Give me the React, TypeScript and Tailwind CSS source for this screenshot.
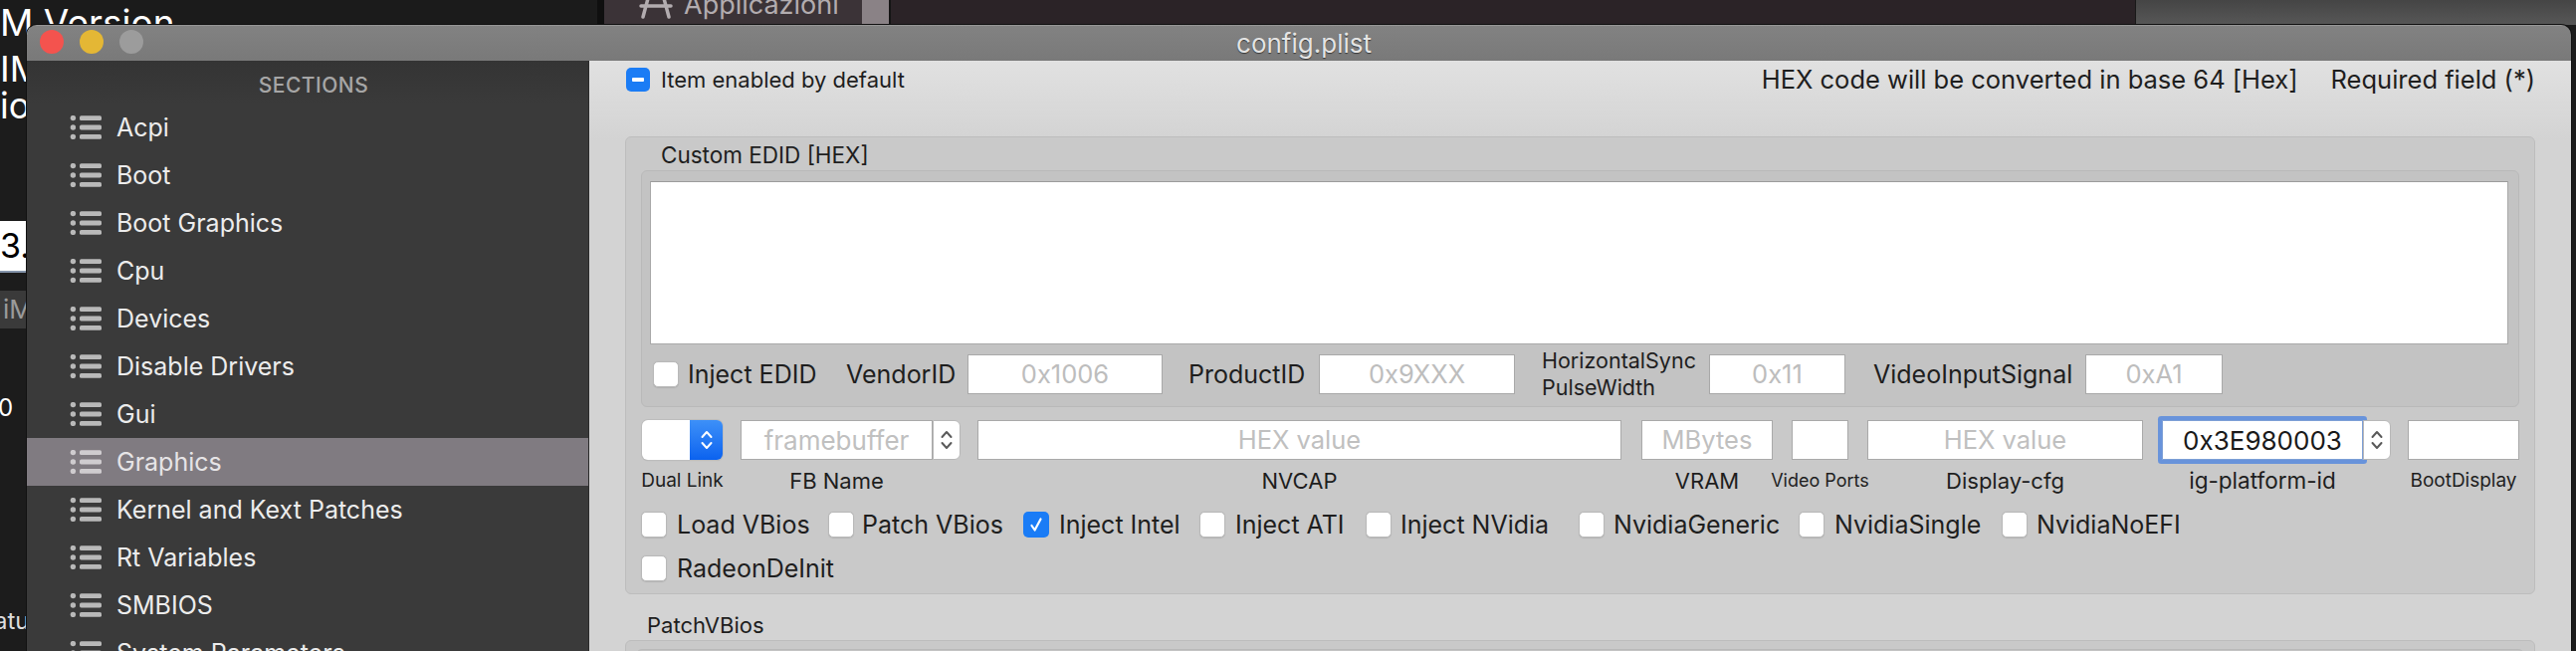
import React from "react";

const sections = [
  "Acpi",
  "Boot",
  "Boot Graphics",
  "Cpu",
  "Devices",
  "Disable Drivers",
  "Gui",
  "Graphics",
  "Kernel and Kext Patches",
  "Rt Variables",
  "SMBIOS",
  "System Parameters",
];

function ListIcon({ light }: { light?: boolean }) {
  const c = light ? "#cfcccf" : "#b9b9b9";
  return (
    <svg width="32" height="24" viewBox="0 0 32 24" className="shrink-0">
      {[2.6, 12, 21.4].map((y) => (
        <g key={y} fill={c}>
          <circle cx="3.4" cy={y} r="2.7" />
          <rect x="10" y={y - 2.4} width="22" height="4.8" rx="1.6" />
        </g>
      ))}
    </svg>
  );
}

function Check({ checked }: { checked?: boolean }) {
  if (checked) {
    return (
      <span className="w-[26px] h-[26px] rounded-[5px] bg-[#1a7cf6] flex items-center justify-center shrink-0">
        <svg width="16" height="18" viewBox="0 0 16 18">
          <path
            d="M3.5 10 L6.6 14.5 L12.5 3.5"
            stroke="white"
            strokeWidth="2.2"
            fill="none"
            strokeLinecap="round"
            strokeLinejoin="round"
          />
        </svg>
      </span>
    );
  }
  return (
    <span className="w-[26px] h-[26px] rounded-[5px] bg-white border border-[#b9b9b9] shadow-[0_0.5px_1px_rgba(0,0,0,0.1)] shrink-0" />
  );
}

function Chevrons({ color }: { color: string }) {
  return (
    <svg width="14" height="24" viewBox="0 0 14 24">
      <path
        d="M2.5 9 L7 4 L11.5 9 M2.5 15 L7 20 L11.5 15"
        stroke={color}
        strokeWidth="2"
        fill="none"
        strokeLinecap="round"
        strokeLinejoin="round"
      />
    </svg>
  );
}

function Stepper() {
  return (
    <div className="w-[28px] h-[40px] bg-white rounded-r-[6px] border border-[#b8b8b8] flex items-center justify-center shrink-0">
      <Chevrons color="#5a5a5a" />
    </div>
  );
}

const checkRow = [
  { label: "Load VBios", item: "", text: "w-[133px]", gap: "ml-[10px]" },
  { label: "Patch VBios", item: "ml-[19px]", text: "w-[145px]", gap: "ml-[8px]" },
  { label: "Inject Intel", item: "ml-[17px]", text: "w-[124px]", gap: "ml-[10px]", checked: true },
  { label: "Inject ATI", item: "ml-[17px]", text: "w-[110px]", gap: "ml-[10px]" },
  { label: "Inject NVidia", item: "ml-[21px]", text: "w-[152px]", gap: "ml-[9px]" },
  { label: "NvidiaGeneric", item: "ml-[27px]", text: "w-[169px]", gap: "ml-[9px]" },
  { label: "NvidiaSingle", item: "ml-[17px]", text: "w-[149px]", gap: "ml-[10px]" },
  { label: "NvidiaNoEFI", item: "ml-[19px]", text: "w-[145px]", gap: "ml-[9px]" },
];

export default function App() {
  return (
    <div className="relative w-[2588px] h-[654px] overflow-hidden bg-[#1c1c1c] font-['Inter',sans-serif]">
      {/* desktop behind the window */}
      <div className="absolute left-0 top-0 w-full h-[25px] flex">
        <div className="w-[600px] bg-[#1b1b1b]" />
        <div className="w-[7px] bg-[#0f0f0f]" />
        <div className="w-[259px] bg-[#3b3337] flex items-end overflow-hidden">
          <div className="flex items-center gap-[10px] pl-[34px] translate-y-[-6px]">
            <svg width="36" height="30" viewBox="0 0 36 30">
              <path d="M12 2 L5 28 M24 2 L31 28 M3 17 H33" stroke="#b2acaf" strokeWidth="3.5" strokeLinecap="round" fill="none" />
            </svg>
            <span className="text-[27px] text-[#b2acaf] leading-none">Applicazioni</span>
          </div>
        </div>
        <div className="w-[27px] bg-[#8a8286]" />
        <div className="w-[1252px] bg-[#2b2327] border-l-2 border-[#141414]" />
        <div className="flex-1 bg-gradient-to-b from-[#454545] to-[#575757] border-l border-[#1a1a1a]" />
      </div>
      <div className="absolute left-[0px] top-[0px] text-[37px] leading-none text-white whitespace-nowrap pt-[4px]">M Version</div>
      <div className="absolute left-[0px] top-[51px] text-[36px] leading-none text-white whitespace-nowrap">IM</div>
      <div className="absolute left-[0px] top-[88px] text-[36px] leading-none text-white whitespace-nowrap">io</div>
      <div className="absolute left-0 top-[222px] w-[40px] h-[52px] bg-white border-b-2 border-[#8494ab] flex items-center text-[34px] text-black leading-none">3.</div>
      <div className="absolute left-0 top-[292px] w-[40px] h-[38px] bg-[#3a3a3a] flex items-center pl-[3px] text-[26px] text-[#9a9a9a] leading-none">iM</div>
      <div className="absolute left-[-2px] top-[398px] text-[24px] leading-none text-white">0</div>
      <div className="absolute left-[-6px] top-[612px] text-[24px] leading-none text-[#dddddd]">atu</div>

      {/* window */}
      <div className="absolute left-[27px] top-[25px] w-[2556px] h-[660px] rounded-t-[10px] overflow-hidden flex flex-col shadow-[0_0_0_1px_#111]">
        <div className="relative h-[36px] shrink-0 bg-gradient-to-b from-[#828282] to-[#797979] flex items-center justify-center border-t border-[#959595]">
          <div className="absolute left-[13px] top-[4px] flex gap-[16px]">
            <span className="w-[24px] h-[24px] rounded-full bg-[#f4534e]" />
            <span className="w-[24px] h-[24px] rounded-full bg-[#e4b735]" />
            <span className="w-[24px] h-[24px] rounded-full bg-[#9c9c9c]" />
          </div>
          <span className="text-[26px] leading-none text-[#e4e4e4] [text-shadow:0_1px_1px_rgba(0,0,0,0.55)] translate-x-[5px]">
            config.plist
          </span>
        </div>

        <div className="flex flex-1 min-h-0">
          {/* sidebar */}
          <div className="w-[565px] shrink-0 bg-[#3a3a3a] rounded-tl-[6px] border-r border-[#2c2c2c] flex flex-col">
            <div className="h-[43px] flex items-end justify-center pl-[12px] pb-[8px] bg-gradient-to-b from-[#343434] to-[#3a3a3a]">
              <span className="text-[21px] leading-none text-[#a6a6a6] font-medium tracking-[0.5px]">SECTIONS</span>
            </div>
            {sections.map((s) => {
              const sel = s === "Graphics";
              return (
                <div
                  key={s}
                  className={
                    sel
                      ? "h-[48px] shrink-0 flex items-center pl-[43px] gap-[15px] bg-[#807b81]"
                      : "h-[48px] shrink-0 flex items-center pl-[43px] gap-[15px]"
                  }
                >
                  <ListIcon light={sel} />
                  <span className={sel ? "text-[25px] leading-none text-[#e6e4e6]" : "text-[25px] leading-none text-[#ececec]"}>
                    {s}
                  </span>
                </div>
              );
            })}
          </div>

          {/* content */}
          <div className="flex-1 bg-[linear-gradient(#e1e1e1,#d3d3d3_80px,#d3d3d3)] pl-[36px] pr-[36px] flex flex-col text-[#1e1e1e]">
            <div className="h-[38px] shrink-0 flex items-center">
              <span className="ml-[1px] w-[24px] h-[24px] rounded-[5px] bg-[#1b7cf5] flex items-center justify-center">
                <span className="w-[12px] h-[4px] rounded-[1px] bg-white" />
              </span>
              <span className="ml-[11px] text-[22px] leading-none">Item enabled by default</span>
              <span className="ml-auto text-[25.5px] leading-none">HEX code will be converted in base 64 [Hex]</span>
              <span className="ml-[33px] text-[25.5px] leading-none">Required field (*)</span>
            </div>

            {/* Graphics box */}
            <div className="mt-[38px] h-[460px] shrink-0 rounded-[6px] bg-[#c9c9c9] border border-[#bdbdbd] px-[15px] flex flex-col">
              <div className="h-[33px] shrink-0 flex items-center pl-[20px] pt-[4px]">
                <span className="text-[22.5px] leading-none">Custom EDID [HEX]</span>
              </div>
              <div className="h-[238px] shrink-0 rounded-[6px] bg-[#c3c3c3] border border-[#b9b9b9] pl-[8px] pr-[10px] pt-[10px] flex flex-col">
                <div className="h-[164px] shrink-0 bg-white border border-[#a9a9a9] border-t-[#9c9c9c]" />
                <div className="mt-[10px] h-[40px] flex items-center pl-[3px]">
                  <Check />
                  <span className="ml-[9px] w-[131px] text-[25px] leading-none whitespace-nowrap">Inject EDID</span>
                  <span className="ml-[28px] w-[108px] text-[25px] leading-none whitespace-nowrap">VendorID</span>
                  <div className="ml-[14px] w-[196px] h-[40px] bg-white border border-[#a9a9a9] flex items-center justify-center text-[25.5px] text-[#bdbdbd]">0x1006</div>
                  <span className="ml-[26px] w-[120px] text-[25px] leading-none whitespace-nowrap">ProductID</span>
                  <div className="ml-[11px] w-[197px] h-[40px] bg-white border border-[#a9a9a9] flex items-center justify-center text-[25.5px] text-[#bdbdbd]">0x9XXX</div>
                  <div className="ml-[27px] w-[157px] flex flex-col text-[21.5px] leading-[27px] whitespace-nowrap">
                    <span>HorizontalSync</span>
                    <span>PulseWidth</span>
                  </div>
                  <div className="ml-[11px] w-[137px] h-[40px] bg-white border border-[#a9a9a9] flex items-center justify-center text-[25.5px] text-[#bdbdbd]">0x11</div>
                  <span className="ml-[28px] w-[201px] text-[25px] leading-none whitespace-nowrap">VideoInputSignal</span>
                  <div className="ml-[12px] w-[138px] h-[40px] bg-white border border-[#a9a9a9] flex items-center justify-center text-[25.5px] text-[#bdbdbd]">0xA1</div>
                </div>
              </div>

              {/* fields row */}
              <div className="mt-[13px] flex items-start pl-[1px]">
                <div className="flex flex-col items-center w-[81px]">
                  <div className="w-[81px] h-[40px] rounded-[6px] flex overflow-hidden shadow-[0_0_0_1px_#bdbdbd,0_1px_1px_rgba(0,0,0,0.15)]">
                    <div className="flex-1 bg-white" />
                    <div className="w-[33px] bg-gradient-to-b from-[#3d90f8] to-[#0a62ef] flex items-center justify-center">
                      <Chevrons color="#ffffff" />
                    </div>
                  </div>
                  <span className="mt-[9px] text-[19px] leading-[24px] whitespace-nowrap">Dual Link</span>
                </div>

                <div className="ml-[18px] flex flex-col">
                  <div className="flex">
                    <div className="w-[193px] h-[40px] bg-white border border-[#a9a9a9] flex items-center justify-center text-[26px] text-[#c0c0c0]">framebuffer</div>
                    <Stepper />
                  </div>
                  <div className="w-[193px] flex justify-center mt-[9px]">
                    <span className="text-[22px] leading-[24px] whitespace-nowrap">FB Name</span>
                  </div>
                </div>

                <div className="ml-[17px] flex flex-col items-center w-[647px]">
                  <div className="w-[647px] h-[40px] bg-white border border-[#a9a9a9] flex items-center justify-center text-[25.5px] text-[#c0c0c0]">HEX value</div>
                  <span className="mt-[9px] text-[22px] leading-[24px] whitespace-nowrap">NVCAP</span>
                </div>

                <div className="ml-[20px] flex flex-col items-center w-[132px]">
                  <div className="w-[132px] h-[40px] bg-white border border-[#a9a9a9] flex items-center justify-center text-[25.5px] text-[#c0c0c0]">MBytes</div>
                  <span className="mt-[9px] text-[22px] leading-[24px] whitespace-nowrap">VRAM</span>
                </div>

                <div className="ml-[19px] flex flex-col items-center w-[57px]">
                  <div className="w-[57px] h-[40px] bg-white border border-[#a9a9a9]" />
                  <span className="mt-[9px] text-[18px] leading-[24px] whitespace-nowrap">Video Ports</span>
                </div>

                <div className="ml-[19px] flex flex-col items-center w-[277px]">
                  <div className="w-[277px] h-[40px] bg-white border border-[#a9a9a9] flex items-center justify-center text-[25.5px] text-[#c0c0c0]">HEX value</div>
                  <span className="mt-[9px] text-[22px] leading-[24px] whitespace-nowrap">Display-cfg</span>
                </div>

                <div className="ml-[19px] flex flex-col">
                  <div className="flex">
                    <div className="w-[202px] h-[40px] bg-white border border-[#7d9fd6] rounded-[1px] shadow-[0_0_0_4px_#6893db] flex items-center justify-center text-[26px] text-[#1a1a1a]">0x3E980003</div>
                    <Stepper />
                  </div>
                  <div className="w-[202px] flex justify-center mt-[9px]">
                    <span className="text-[22.5px] leading-[24px] whitespace-nowrap">ig-platform-id</span>
                  </div>
                </div>

                <div className="ml-[17px] flex flex-col items-center w-[112px]">
                  <div className="w-[112px] h-[40px] bg-white border border-[#a9a9a9]" />
                  <span className="mt-[9px] text-[19px] leading-[24px] whitespace-nowrap">BootDisplay</span>
                </div>
              </div>

              {/* checkbox rows */}
              <div className="mt-[19px] h-[26px] flex items-center">
                {checkRow.map((c) => (
                  <div key={c.label} className={"flex items-center " + c.item}>
                    <Check checked={c.checked} />
                    <span className={c.gap + " " + c.text + " text-[25px] leading-none whitespace-nowrap"}>{c.label}</span>
                  </div>
                ))}
              </div>
              <div className="mt-[18px] h-[26px] flex items-center">
                <Check />
                <span className="ml-[10px] text-[25px] leading-none whitespace-nowrap">RadeonDeInit</span>
              </div>
            </div>

            <div className="h-[46px] shrink-0 flex items-center pl-[22px] pt-[16px]">
              <span className="text-[22px] leading-none">PatchVBios</span>
            </div>
            <div className="h-[80px] shrink-0 rounded-[6px] bg-[#c9c9c9] border border-[#bdbdbd] px-[10px] pt-[8px]">
              <div className="h-full rounded-[6px] bg-[#c3c3c3] border border-[#b9b9b9]" />
            </div>
          </div>
        </div>
      </div>
    </div>
  );
}
